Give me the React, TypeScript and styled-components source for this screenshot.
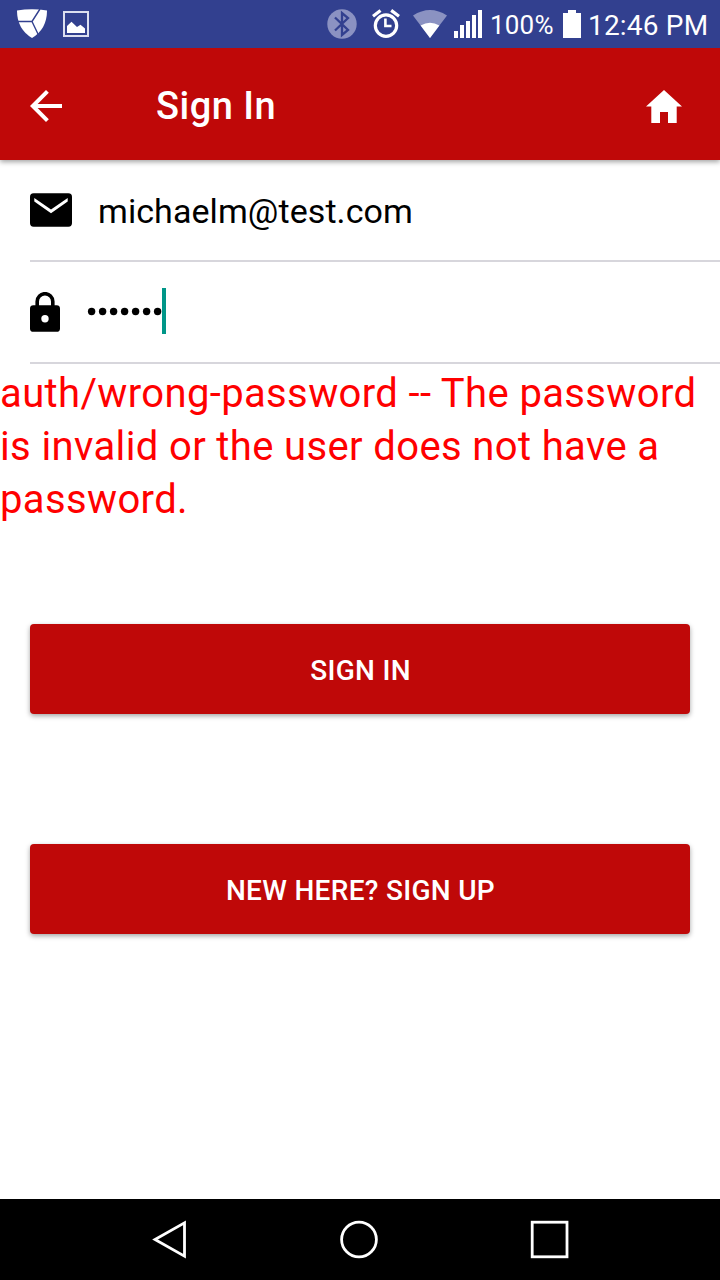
import React from "react";
import styled, { createGlobalStyle } from "styled-components";

const GlobalStyle = createGlobalStyle`
  * { box-sizing: border-box; }
  body { margin: 0; background: #fff; font-family: Roboto, "Liberation Sans", sans-serif; }
  svg { display: block; flex: none; }
`;

const Screen = styled.div`
  display: flex;
  flex-direction: column;
  width: 720px;
  height: 1280px;
  overflow: hidden;
  background: #fff;
`;

const StatusBar = styled.header`
  position: relative;
  z-index: 1;
  display: flex;
  align-items: center;
  justify-content: space-between;
  flex: none;
  height: 48px;
  padding: 0 0 0 16px;
  background: #32408f;
  color: #fff;
`;

const StatusGroup = styled.div`
  display: flex;
  align-items: center;
`;

const StatusText = styled.span<{ $size: number; $width: number; $drop: number }>`
  width: ${(p) => p.$width}px;
  font-size: ${(p) => p.$size}px;
  line-height: 48px;
  letter-spacing: 0.2px;
  padding-top: ${(p) => p.$drop}px;
  white-space: nowrap;
`;

const Spacer = styled.span<{ $w: number }>`
  flex: none;
  width: ${(p) => p.$w}px;
`;

const AppBar = styled.nav`
  display: flex;
  align-items: center;
  flex: none;
  height: 112px;
  padding: 4px 32px 0 22px;
  background: #bf0808;
  color: #fff;
  box-shadow: 0 2px 5px rgba(0, 0, 0, 0.36);
`;

const Title = styled.h1`
  flex: 1;
  margin: 0 0 0 86px;
  font-size: 38px;
  font-weight: 500;
  line-height: 48px;
  letter-spacing: 0.5px;
`;

const IconButton = styled.button`
  padding: 0;
  border: 0;
  background: none;
  color: inherit;
`;

const Form = styled.main`
  flex: 1;
`;

const Field = styled.div<{ $gap: number }>`
  display: flex;
  align-items: center;
  gap: ${(p) => p.$gap}px;
  height: 102px;
  margin-left: 30px;
  border-bottom: 2px solid #d7d6dc;
`;

const Email = styled.span`
  padding-top: 2px;
  font-size: 34px;
  line-height: 46px;
  letter-spacing: 0.08px;
  color: #000;
`;

const Password = styled.span`
  display: flex;
  align-items: center;
  height: 46px;
  margin-bottom: 2px;
  border-right: 4px solid #009688;
`;

const ErrorText = styled.p`
  margin: 3px 0 0;
  font-size: 40px;
  line-height: 53px;
  letter-spacing: 0.37px;
  color: #f00;
`;

const Actions = styled.div`
  display: flex;
  flex-direction: column;
  gap: 130px;
  padding: 98px 30px 0;
`;

const Button = styled.button`
  height: 90px;
  padding: 2px 0 0 1px;
  border: 0;
  border-radius: 4px;
  background: #bf0808;
  color: #fff;
  font: 500 28px Roboto, "Liberation Sans", sans-serif;
  letter-spacing: 0.3px;
  box-shadow: 0 2px 5px rgba(0, 0, 0, 0.36);
`;

const SystemNav = styled.footer`
  display: flex;
  align-items: center;
  flex: none;
  gap: 151px;
  height: 81px;
  padding-left: 150px;
  background: #000;
`;

const ShieldIcon = () => (
  <svg width="32" height="32" viewBox="16 8 32 32">
    <path d="M17 10.5Q32 8 47 10.5Q47 29 32 38Q17 29 17 10.5Z" fill="#fff" />
    <path d="M17 21.5H32L40 9M32 21.5L38 34" fill="none" stroke="#32408f" strokeWidth="1.4" />
  </svg>
);

const PictureIcon = () => (
  <svg width="28" height="28" viewBox="62 10 28 28">
    <rect x="64" y="12" width="24" height="24" fill="none" stroke="#dcdff0" strokeWidth="2" />
    <path d="M67 33V26L71.5 21.8L77 27L80.5 24.8L85 28.5V33Z" fill="#fff" />
  </svg>
);

const BluetoothIcon = () => (
  <svg width="30" height="30" viewBox="327 9 30 30">
    <circle cx="342" cy="24" r="14.7" fill="#8b92c2" />
    <path d="M335 17.5L348 30L342 35V13L348 18L335 30.5" fill="none" stroke="#32408f" strokeWidth="2.3" />
  </svg>
);

const AlarmIcon = () => (
  <svg width="30" height="30" viewBox="371 9 30 30">
    <circle cx="386" cy="25.6" r="10.7" fill="none" stroke="#fff" strokeWidth="3.2" />
    <path d="M385.4 18.5V26H391.5" fill="none" stroke="#fff" strokeWidth="2.6" />
    <path d="M373 16.2L380.5 10.4M391.2 10.4L399 16.2" fill="none" stroke="#fff" strokeWidth="3.2" />
  </svg>
);

const WifiIcon = () => (
  <svg width="34" height="30" viewBox="413 9 34 30">
    <path d="M413 15.5Q430 4.5 447 15.5L430 38Z" fill="#8b92c2" />
    <path d="M420.6 25.5Q430 20 439.4 25.5L430 38Z" fill="#fff" />
  </svg>
);

const SignalIcon = () => (
  <svg width="28" height="28" viewBox="454 10 28 28">
    <path d="M454 31h4v7h-4zM460 25h4v13h-4zM466 21h4v17h-4zM472 15h4v23h-4zM478 10h4v28h-4z" fill="#fff" />
  </svg>
);

const BatteryIcon = () => (
  <svg width="18" height="28" viewBox="563 10 18 28">
    <path d="M568 10h8v3h5v25h-18v-25h5z" fill="#fff" />
  </svg>
);

const BackArrow = () => (
  <svg width="48" height="48" viewBox="0 0 24 24">
    <path d="M20 11H7.83l5.59-5.59L12 4l-8 8 8 8 1.41-1.41L7.83 13H20v-2z" fill="currentColor" />
  </svg>
);

const HomeIcon = () => (
  <svg width="48" height="48" viewBox="640 82 48 48">
    <path d="M664 90L682 106.4H676.7V123H668V112H660V123H651.3V106.4H646Z" fill="currentColor" />
  </svg>
);

const MailIcon = () => (
  <svg width="42" height="34" viewBox="30 193 42 34">
    <rect x="30" y="193.3" width="42" height="33.4" rx="3.6" fill="#000" />
    <path d="M34.3 198L51 209.6L67.7 198V201.6L51 213.2L34.3 201.6Z" fill="#fff" />
  </svg>
);

const LockIcon = () => (
  <svg width="30" height="40" viewBox="30 292 30 40">
    <path d="M37.2 306V301.5A7.8 7.8 0 0 1 52.8 301.5V306" fill="none" stroke="#000" strokeWidth="3.6" />
    <rect x="30" y="305.2" width="30" height="26.6" rx="3.4" fill="#000" />
    <circle cx="45" cy="318.7" r="3.7" fill="#fff" />
  </svg>
);

const PasswordDots = () => (
  <svg width="75" height="46" viewBox="87 288 75 46">
    {Array.from({ length: 7 }, (_, i) => (
      <circle key={i} cx={91.6 + i * 11} cy="311.5" r="3.7" fill="#000" />
    ))}
  </svg>
);

export default function App() {
  return (
    <Screen>
      <GlobalStyle />
      <StatusBar>
        <StatusGroup>
          <ShieldIcon />
          <Spacer $w={14} />
          <PictureIcon />
        </StatusGroup>
        <StatusGroup>
          <BluetoothIcon />
          <Spacer $w={14} />
          <AlarmIcon />
          <Spacer $w={12} />
          <WifiIcon />
          <Spacer $w={7} />
          <SignalIcon />
          <Spacer $w={8} />
          <StatusText $size={26} $width={73} $drop={2}>100%</StatusText>
          <BatteryIcon />
          <Spacer $w={7} />
          <StatusText $size={28} $width={132} $drop={3}>12:46 PM</StatusText>
        </StatusGroup>
      </StatusBar>
      <AppBar>
        <IconButton aria-label="Back"><BackArrow /></IconButton>
        <Title>Sign In</Title>
        <IconButton aria-label="Home"><HomeIcon /></IconButton>
      </AppBar>
      <Form>
        <Field $gap={26}>
          <MailIcon />
          <Email>michaelm@test.com</Email>
        </Field>
        <Field $gap={27}>
          <LockIcon />
          <Password><PasswordDots /></Password>
        </Field>
        <ErrorText>
          auth/wrong-password -- The password is invalid or the user does not have a password.
        </ErrorText>
        <Actions>
          <Button>SIGN IN</Button>
          <Button>NEW HERE? SIGN UP</Button>
        </Actions>
      </Form>
      <SystemNav>
        <svg width="38" height="41" viewBox="150 1219 38 41">
          <path d="M184.5 1222.8V1256.2L155 1239.5Z" fill="none" stroke="#fff" strokeWidth="2.8" />
        </svg>
        <svg width="40" height="41" viewBox="339 1219 40 41">
          <circle cx="359" cy="1239.5" r="17.4" fill="none" stroke="#fff" strokeWidth="2.8" />
        </svg>
        <svg width="40" height="41" viewBox="530 1219 40 41">
          <rect x="532.2" y="1222.2" width="34.8" height="34.6" fill="none" stroke="#fff" strokeWidth="2.8" />
        </svg>
      </SystemNav>
    </Screen>
  );
}
